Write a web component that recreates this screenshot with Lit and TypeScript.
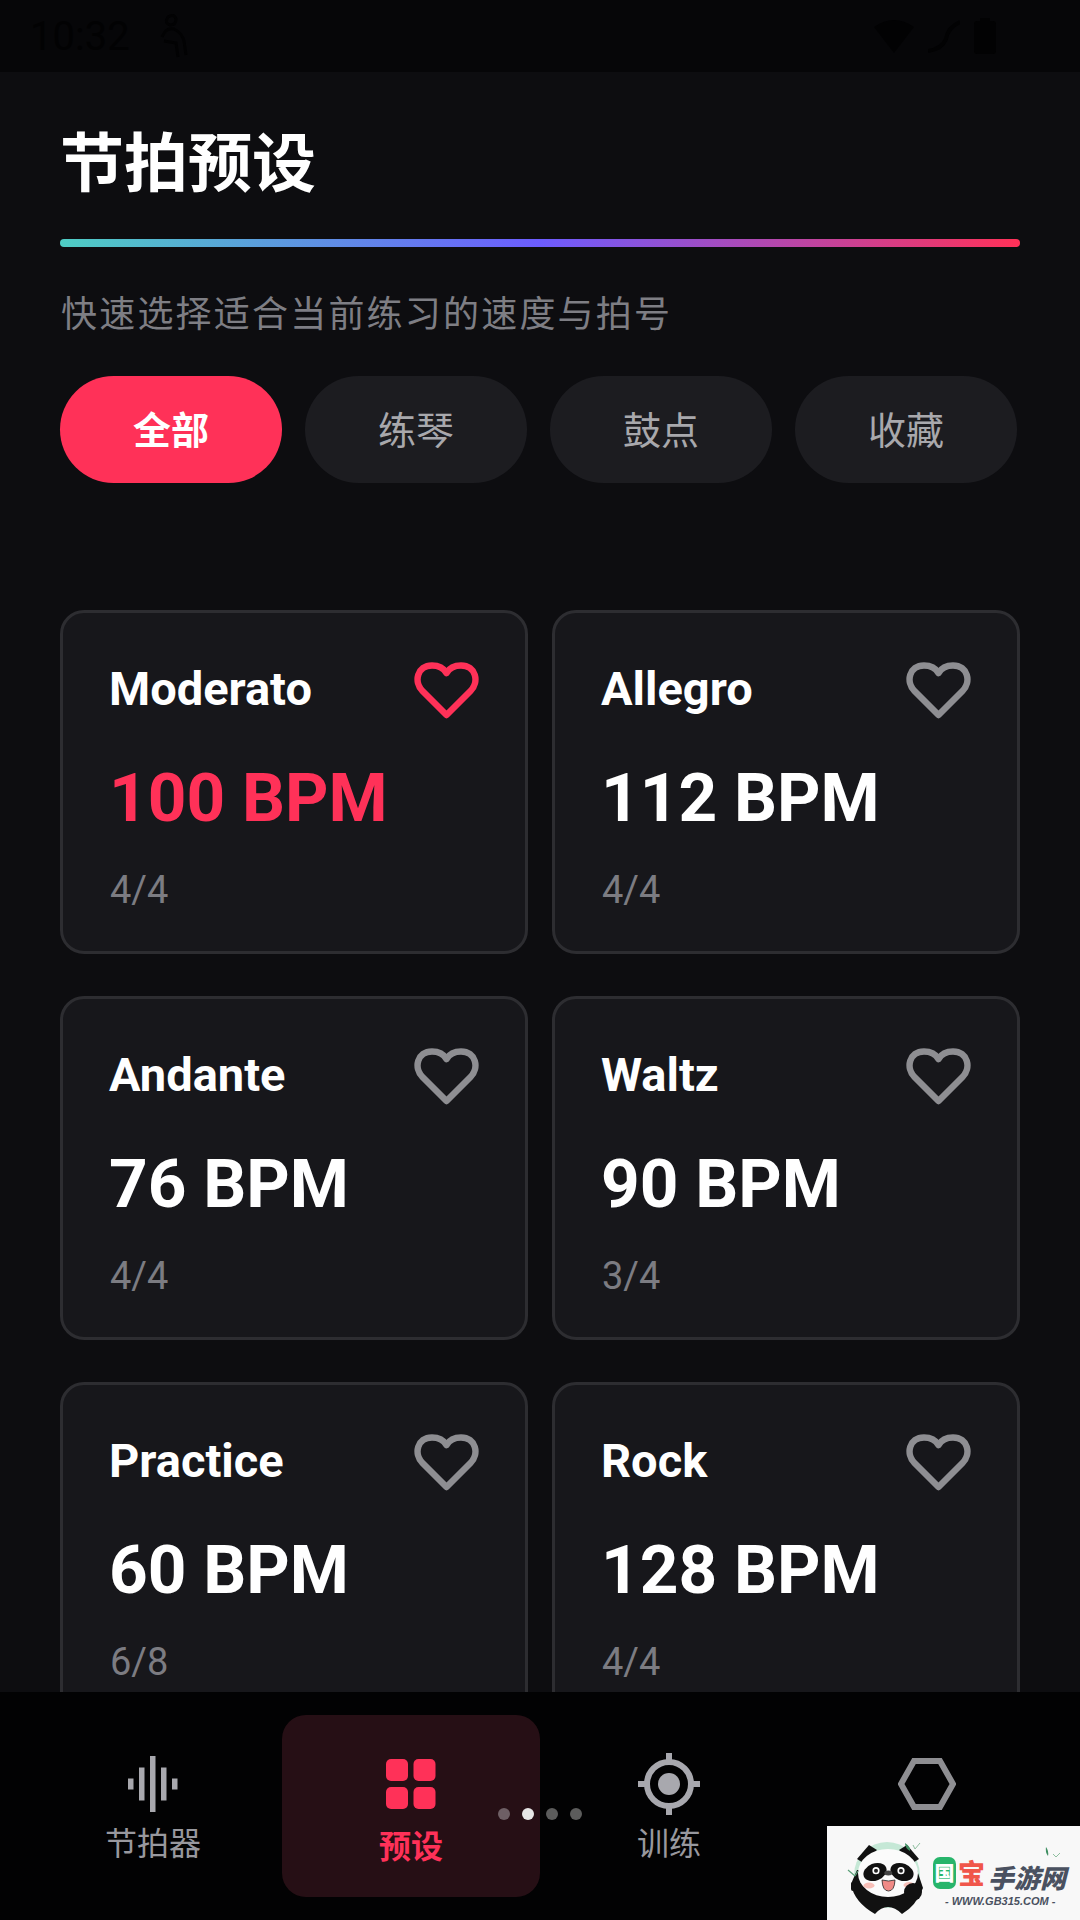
import { LitElement, html, css, svg } from 'lit';
import { customElement } from 'lit/decorators.js';
import { classMap } from 'lit/directives/class-map.js';

const chips = ['全部', '练琴', '鼓点', '收藏'];

const presets = [
  { name: 'Moderato', bpm: 100, sig: '4/4', active: true },
  { name: 'Allegro', bpm: 112, sig: '4/4' },
  { name: 'Andante', bpm: 76, sig: '4/4' },
  { name: 'Waltz', bpm: 90, sig: '3/4' },
  { name: 'Practice', bpm: 60, sig: '6/8' },
  { name: 'Rock', bpm: 128, sig: '4/4' },
];

const heart = html`<svg class="heart" viewBox="0 0 65 57" fill="none" stroke="currentColor" stroke-width="6.500" stroke-linejoin="round">
  <path d="M32.500 53 L8.500 29 C-0.500 20 3 3.500 18 3.500 C24 3.500 29.500 6 32.500 11 C35.500 6 41 3.500 47 3.500 C62 3.500 65.500 20 56.500 29 Z" />
</svg>`;

const waveIcon = html`<svg class="tab-icon" width="50" height="56" viewBox="0 0 50 56" fill="#a8a8ae">
  <rect x="0" y="22.500" width="5.500" height="11" />
  <rect x="11" y="11.500" width="5.500" height="33" />
  <rect x="22" y="0" width="5.500" height="56" />
  <rect x="33" y="11.500" width="5.500" height="33" />
  <rect x="44" y="22.500" width="5.500" height="11" />
</svg>`;

const gridIcon = html`<svg class="tab-icon" width="50" height="50" viewBox="0 0 50 50" fill="#ff3158">
  <rect x="0" y="0" width="22" height="22" rx="5" />
  <rect x="27.500" y="0" width="22" height="22" rx="5" />
  <rect x="0" y="28" width="22" height="22" rx="5" />
  <rect x="27.500" y="28" width="22" height="22" rx="5" />
</svg>`;

const targetIcon = html`<svg class="tab-icon" width="62" height="62" viewBox="0 0 62 62" fill="#a8a8ae">
  <circle cx="31" cy="31" r="22" fill="none" stroke="#a8a8ae" stroke-width="6" />
  <circle cx="31" cy="31" r="11" />
  <rect x="28" y="0" width="6" height="10" />
  <rect x="28" y="52" width="6" height="10" />
  <rect x="0" y="28" width="10" height="6" />
  <rect x="52" y="28" width="10" height="6" />
</svg>`;

const hexIcon = html`<svg class="tab-icon" width="58" height="52" viewBox="0 0 58 52" fill="none" stroke="#8e8e92" stroke-width="6" stroke-linejoin="miter">
  <path d="M16 3 H42 L55 26 L42 49 H16 L3 26 Z" />
</svg>`;

// panda mascot of the corner watermark, drawn in the box's own coordinates
const panda = svg`<svg class="panda" width="253" height="94" viewBox="0 0 253 94">
  <circle cx="60" cy="49" r="33" fill="#c5e8d6" />
  <path d="M30 33 L42 19 L50 24 L38 38 Z" fill="#111" />
  <path d="M72 24 L80 19 L92 33 L84 38 Z" fill="#111" />
  <path d="M24 58 Q27 76 48 88 Q54 81 61 81 Q68 81 75 88 Q89 80 96 62 L90 44 L30 44 Z" fill="#111" />
  <ellipse cx="61" cy="47" rx="30" ry="24" fill="#fbfbfb" />
  <ellipse cx="48" cy="46" rx="12" ry="8.500" fill="#111" transform="rotate(-22 48 46)" />
  <ellipse cx="75" cy="46" rx="12" ry="8.500" fill="#111" transform="rotate(22 75 46)" />
  <circle cx="49" cy="44.700" r="3.600" fill="#fff" />
  <circle cx="74" cy="44.700" r="3.600" fill="#fff" />
  <circle cx="49" cy="44.700" r="2" fill="#222" />
  <circle cx="74" cy="44.700" r="2" fill="#222" />
  <ellipse cx="61.300" cy="47" rx="4" ry="2.500" fill="#444" />
  <path d="M55 54 Q61.500 56 68 54 Q67.500 65 61.500 65 Q55.500 65 55 54 Z" fill="#f08a86" stroke="#222" stroke-width="0.800" />
  <ellipse cx="42" cy="59.500" rx="5.500" ry="3" fill="#f8bfb8" />
  <ellipse cx="82" cy="59" rx="5.500" ry="3" fill="#f8bfb8" />
  <circle cx="86" cy="66" r="9" fill="#111" />
  <rect x="24" y="56" width="9" height="9" rx="2" fill="#111" />
  <path d="M78 17 Q84 21 83 25 Q78 22 78 17 Z" fill="#3f8f62" />
  <path d="M88 23 L93 17 M88 23 L86 19" stroke="#8fbfa0" stroke-width="1" fill="none" />
  <path d="M21 44 L28 50 M28 50 L31 45" stroke="#5a9f78" stroke-width="1.200" fill="none" />
  <path d="M219 21 Q222 25 221 30 Q218 26 219 21 Z" fill="#3f8f62" />
  <path d="M229 31 L233 27 M229 31 L226 28" stroke="#8fbfa0" stroke-width="1" fill="none" />
</svg>`;

@customElement('app-root')
export class AppRoot extends LitElement {
  static styles = css`
    :host {
      display: block;
      position: relative;
      width: 1080px;
      height: 1920px;
      overflow: hidden;
      background: #0d0d10;
      font-family: Roboto, "Noto Sans CJK SC", sans-serif;
    }
    .page {
      display: flex;
      flex-direction: column;
      height: 1920px;
    }

    .status {
      flex: none;
      height: 72px;
      display: flex;
      align-items: center;
      gap: 26px;
      padding: 0 84px 0 30px;
      box-sizing: border-box;
      background: #060608;
      color: #020203;
      font-size: 40px;
    }
    .status svg {
      display: block;
    }
    .status .right {
      margin-left: auto;
      display: flex;
      align-items: center;
      gap: 14px;
    }

    .content {
      flex: 1;
      min-height: 0;
      overflow: hidden;
      padding: 0 60px;
    }
    h1 {
      margin: 46px 0 0 0;
      height: 80px;
      line-height: 80px;
      font-size: 64px;
      font-weight: 700;
      color: #fff;
      font-family: "Noto Sans CJK SC", sans-serif;
    }
    .rule {
      margin-top: 41px;
      height: 8px;
      border-radius: 4px;
      background: linear-gradient(90deg, #4ecdc4 0%, #6c5cff 50%, #ff3158 100%);
    }
    .sub {
      margin: 38px 0 0 1px;
      height: 52px;
      line-height: 52px;
      font-size: 36px;
      letter-spacing: 2.200px;
      color: #7e7e84;
      font-family: "Noto Sans CJK SC", sans-serif;
    }
    .chips {
      margin-top: 39px;
      display: flex;
      gap: 23px;
    }
    .chip {
      box-sizing: border-box;
      width: 222px;
      height: 107px;
      padding-bottom: 4px;
      border-radius: 54px;
      background: #1c1c20;
      color: #a8a8ac;
      font-size: 38px;
      display: flex;
      align-items: center;
      justify-content: center;
      font-family: "Noto Sans CJK SC", sans-serif;
    }
    .chip.on {
      background: #ff3158;
      color: #fff;
      font-weight: 700;
    }

    .grid {
      margin-top: 127px;
      display: grid;
      grid-template-columns: 468px 468px;
      column-gap: 24px;
      row-gap: 42px;
    }
    .card {
      box-sizing: border-box;
      height: 344px;
      padding: 44px 46px 0 46px;
      border: 3px solid #2d2d31;
      border-radius: 24px;
      background: #17171b;
    }
    .head {
      display: flex;
      justify-content: space-between;
      align-items: flex-start;
    }
    .name {
      font-size: 47px;
      line-height: 64px;
      font-weight: 700;
      color: #fff;
    }
    .heart {
      display: block;
      width: 65px;
      height: 57px;
      margin-top: 5px;
      color: #8e8e92;
    }
    .card.on .heart,
    .card.on .bpm {
      color: #ff3158;
    }
    .bpm {
      margin-top: 33px;
      font-size: 67.500px;
      line-height: 88px;
      font-weight: 700;
      color: #fff;
    }
    .sig {
      margin: 24px 0 0 1px;
      font-size: 38px;
      line-height: 48px;
      color: #7c7c82;
    }

    .nav {
      flex: none;
      height: 228px;
      box-sizing: border-box;
      padding: 23px 24px;
      display: grid;
      grid-template-columns: repeat(4, 258px);
      background: #020203;
    }
    .tab {
      height: 182px;
      border-radius: 24px;
      display: flex;
      flex-direction: column;
      align-items: center;
      font-size: 32px;
      color: #98989e;
      font-family: "Noto Sans CJK SC", sans-serif;
    }
    .tab.on {
      background: #260f15;
      color: #ff3158;
      font-weight: 700;
    }
    .icon-box {
      height: 68px;
      margin-top: 35px;
      display: flex;
      align-items: center;
      justify-content: center;
    }
    .tab-icon {
      display: block;
    }
    .tab span {
      line-height: 44px;
      margin-top: 1px;
    }
    .tab.on span {
      margin-top: 4px;
    }

    .dots {
      position: absolute;
      left: 498px;
      top: 1808px;
      display: flex;
      gap: 12px;
    }
    .dots i {
      width: 12px;
      height: 12px;
      border-radius: 50%;
      background: #5c5c5c;
    }
    .dots i:nth-child(1) {
      background: #6e5f65;
    }
    .dots i:nth-child(2) {
      background: #e6e6e6;
    }

    .mark {
      position: absolute;
      right: 0;
      bottom: 0;
      width: 253px;
      height: 94px;
      overflow: hidden;
      background: #f8f8f8;
    }
    .panda {
      position: absolute;
      left: 0;
      top: 0;
    }
    .brand {
      position: absolute;
      left: 106px;
      top: 31px;
      display: flex;
      align-items: flex-start;
      font-family: "Noto Sans CJK SC", sans-serif;
      font-weight: 900;
      white-space: nowrap;
    }
    .guo {
      width: 23px;
      height: 32px;
      border-radius: 7px;
      background: #27b56b;
      color: #fff;
      font-size: 20px;
      text-align: center;
      line-height: 31px;
    }
    .bao {
      margin-left: 2px;
      color: #f0564a;
      font-size: 27px;
      line-height: 32px;
    }
    .rest {
      margin: 6px 0 0 3px;
      color: #4a5160;
      font-style: italic;
      font-size: 26px;
      line-height: 28px;
    }
    .url {
      position: absolute;
      left: 118px;
      top: 67px;
      font-family: "Liberation Sans", sans-serif;
      font-size: 11px;
      line-height: 16px;
      font-weight: 700;
      font-style: italic;
      color: #4a5160;
      white-space: nowrap;
    }
  `;

  render() {
    return html`
      <div class="page">
        <div class="status">
          <span>10:32</span>
          <svg width="34" height="46" viewBox="0 0 34 46" fill="none" stroke="#020203" stroke-width="3">
            <path d="M12 4 Q18 0 20 6 Q20 12 14 12 Q8 10 12 4 Z M6 24 Q10 14 18 16 Q26 20 28 28 L30 42 M8 28 L20 30 L22 44" />
          </svg>
          <div class="right">
            <svg width="40" height="34" viewBox="0 0 40 34" fill="#020203"><path d="M0 8 Q20 -6 40 8 L20 34 Z" /></svg>
            <svg width="32" height="34" viewBox="0 0 32 34" fill="none" stroke="#020203" stroke-width="4"><path d="M32 3 Q20 8 18 20 Q14 30 0 32" /></svg>
            <svg width="22" height="36" viewBox="0 0 22 36" fill="#020203"><rect y="3" width="22" height="33" rx="3" /><rect x="6" width="10" height="4" /></svg>
          </div>
        </div>

        <div class="content">
          <h1>节拍预设</h1>
          <div class="rule"></div>
          <div class="sub">快速选择适合当前练习的速度与拍号</div>
          <div class="chips">
            ${chips.map((c, i) => html`<div class=${classMap({ chip: true, on: i === 0 })}>${c}</div>`)}
          </div>
          <div class="grid">
            ${presets.map(
              p => html`
                <div class=${classMap({ card: true, on: !!p.active })}>
                  <div class="head">
                    <div class="name">${p.name}</div>
                    ${heart}
                  </div>
                  <div class="bpm">${p.bpm} BPM</div>
                  <div class="sig">${p.sig}</div>
                </div>
              `
            )}
          </div>
        </div>

        <nav class="nav">
          <div class="tab"><div class="icon-box">${waveIcon}</div><span>节拍器</span></div>
          <div class="tab on"><div class="icon-box">${gridIcon}</div><span>预设</span></div>
          <div class="tab"><div class="icon-box">${targetIcon}</div><span>训练</span></div>
          <div class="tab"><div class="icon-box">${hexIcon}</div></div>
        </nav>
      </div>

      <div class="dots"><i></i><i></i><i></i><i></i></div>

      <div class="mark">
        ${panda}
        <div class="brand">
          <span class="guo">国</span><span class="bao">宝</span><span class="rest">手游网</span>
        </div>
        <div class="url">- WWW.GB315.COM -</div>
      </div>
    `;
  }
}
